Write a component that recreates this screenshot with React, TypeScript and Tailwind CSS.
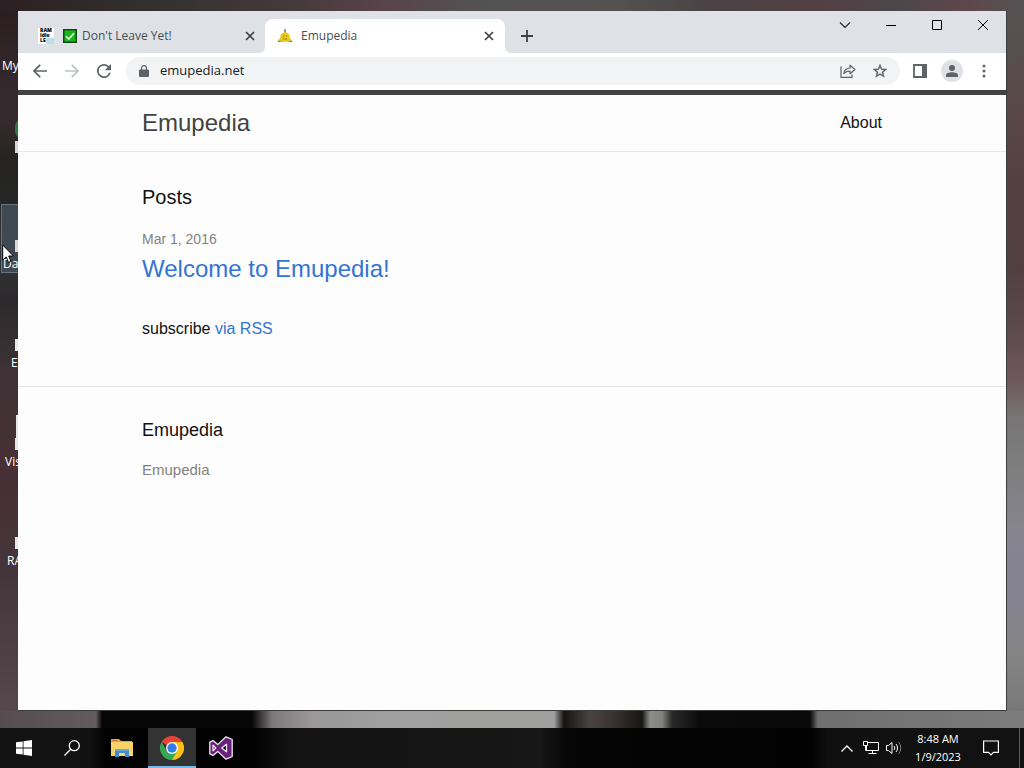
import React from "react";

const tabIcon = "h-4 w-4 shrink-0";

const desktopIcons = [
    { label: "My Computer", short: "My", className: "top-[49px] left-[2px]" },
    { label: "Database", short: "Da", className: "top-[247px] left-[3px]" },
    { label: "Emulators", short: "E", className: "top-[346px] left-[11px]" },
    { label: "Visual Studio", short: "Vis", className: "top-[445px] left-[5px]" },
    { label: "RAM Idle", short: "RA", className: "top-[544px] left-[7px]" },
];

function CloseIcon() {
    return (
        <svg viewBox="0 0 10 10" className="h-2.5 w-2.5" fill="none" stroke="#3c4043" strokeWidth="1.7">
            <path d="M1 1l8 8M9 1l-8 8" />
        </svg>
    );
}

function Desktop() {
    return (
        <div className="relative overflow-hidden bg-[linear-gradient(180deg,#2b1f22_0%,#33282b_10%,#352a2d_16%,#252423_21%,#252626_27%,#33363a_34%,#2c2a2c_41%,#3e3236_52%,#472f34_65%,#44353a_80%,#54484d_100%)]">
            <div className="absolute top-[108px] left-[15px] h-5 w-4 rounded-full bg-[#2b7a3e]" />
            <div className="absolute top-[130px] left-[15px] h-3 w-1 bg-[#d8d8d8]" />
            <div className="absolute top-[193px] left-[1px] h-[69px] w-20 border border-[#68727a] bg-[#3f4952]" />
            <div className="absolute top-[229px] left-[15px] h-3 w-1 bg-[#d8d8d8]" />
            <div className="absolute top-[328px] left-[15px] h-3 w-1 bg-[#e8e8e8]" />
            <div className="absolute top-[404px] left-[16px] h-6 w-1 bg-[#e8e8e8]" />
            <div className="absolute top-[427px] left-[15px] h-3 w-1 bg-[#e8e8e8]" />
            <div className="absolute top-[526px] left-[15px] h-3 w-1 bg-[#e8e8e8]" />
            {desktopIcons.map((icon) => (
                <span key={icon.label} title={icon.label} className={`absolute text-xs leading-none whitespace-nowrap text-white ${icon.className}`}>
                    {icon.short}
                </span>
            ))}
            <svg viewBox="0 0 12 20" className="absolute top-[233px] left-[2px] h-5 w-3">
                <path d="M.7 1v15.2l3.5-3.3 2.3 5.5 2.5-1-2.3-5.4h4.8z" fill="#fff" stroke="#000" />
            </svg>
        </div>
    );
}

function TabStrip() {
    return (
        <div className="flex h-[42px] items-start justify-between bg-[#dee1e6]">
            <div className="flex h-full items-end">
                <div className="flex h-[34px] w-[247px] items-center pr-[7px] pl-5">
                    <div className={`${tabIcon} bg-white pl-0.5 text-[5px] leading-[5px] font-black text-black`}>
                        <div>RAM</div>
                        <div>Idle</div>
                        <div className="flex justify-between">
                            LE
                            <span className="h-1.5 w-2 bg-[#b9e1e8]" />
                        </div>
                    </div>
                    <svg viewBox="0 0 14 14" className="ml-[9px] h-3.5 w-3.5 shrink-0">
                        <rect x=".7" y=".7" width="12.6" height="12.6" fill="#16b51c" stroke="#10420f" strokeWidth="1.4" />
                        <path d="M3 7.3l2.7 2.8L11 4.2" fill="none" stroke="#e9ffe9" strokeWidth="1.6" />
                    </svg>
                    <span className="ml-[5px] flex-1 text-xs whitespace-nowrap text-[#4b4e52]">Don't Leave Yet!</span>
                    <button aria-label="Close tab" className="flex h-4 w-4 items-center justify-center">
                        <CloseIcon />
                    </button>
                </div>
                <div className="relative flex h-[34px] w-60 items-center rounded-t-lg bg-white pr-2 pl-3">
                    {/* Curved feet of the active tab */}
                    <svg viewBox="0 0 6 6" className="absolute bottom-0 -left-1.5 h-1.5 w-1.5">
                        <path d="M6 0v6H0a6 6 0 0 0 6-6z" fill="#fff" />
                    </svg>
                    <svg viewBox="0 0 6 6" className="absolute -right-1.5 bottom-0 h-1.5 w-1.5">
                        <path d="M0 0v6h6a6 6 0 0 1-6-6z" fill="#fff" />
                    </svg>
                    <svg viewBox="0 0 16 16" className={tabIcon}>
                        <path d="M7.4 1h1.2l.5 4H7z" fill="#8c7a4a" />
                        <path d="M.3 14L4 9.5l1.500 4.500zM15.700 14L12 9.500 10.500 14z" fill="#8d8150" />
                        <path d="M8 3.500l2 1.500 2.400 1.500.2 3 1.800 2.800-2.400 1.500H4l-2.400-1.500 1.800-2.800.2-3L6 5z" fill="#e8c81c" />
                        <path d="M6 7.500h1.200v1.200H6zM9 7.500h1.200v1.200H9zM6 10.500h4v1H6z" fill="#a4860f" />
                    </svg>
                    <span className="ml-2 flex-1 text-xs text-[#4b4e52]">Emupedia</span>
                    <button aria-label="Close tab" className="flex h-4 w-4 items-center justify-center">
                        <CloseIcon />
                    </button>
                </div>
                <button aria-label="New tab" className="ml-2 flex h-[34px] w-7 items-center justify-center">
                    <svg viewBox="0 0 12 12" className="h-3 w-3" stroke="#3c4043" strokeWidth="1.8">
                        <path d="M6 0v12M0 6h12" />
                    </svg>
                </button>
            </div>
            <div className="flex">
                <button aria-label="Search tabs" className="flex h-7 w-[46px] items-center justify-center">
                    <svg viewBox="0 0 12 12" className="h-3 w-3" fill="none" stroke="#202124" strokeWidth="1.1">
                        <path d="M1 3.5l5 5 5-5" />
                    </svg>
                </button>
                <button aria-label="Minimize" className="flex h-7 w-[46px] items-center justify-center">
                    <svg viewBox="0 0 10 10" className="h-2.5 w-2.5" stroke="#000">
                        <path d="M0 5.5h10" />
                    </svg>
                </button>
                <button aria-label="Maximize" className="flex h-7 w-[46px] items-center justify-center">
                    <svg viewBox="0 0 10 10" className="h-2.5 w-2.5" fill="none" stroke="#000">
                        <path d="M.5.5h9v9h-9z" />
                    </svg>
                </button>
                <button aria-label="Close" className="flex h-7 w-[46px] items-center justify-center">
                    <svg viewBox="0 0 10 10" className="h-2.5 w-2.5" stroke="#000">
                        <path d="M0 0l10 10M10 0L0 10" />
                    </svg>
                </button>
            </div>
        </div>
    );
}

function Toolbar() {
    return (
        <div className="flex h-[37px] items-center bg-white pr-1.5 pb-px pl-1.5">
            <button aria-label="Back" className="flex h-8 w-8 items-center justify-center">
                <svg viewBox="0 0 14 14" className="h-3.5 w-3.5" fill="none" stroke="#5f6368" strokeWidth="1.7">
                    <path d="M14 7H1.2M7.2.8L1 7l6.2 6.2" />
                </svg>
            </button>
            <button aria-label="Forward" className="flex h-8 w-8 items-center justify-center">
                <svg viewBox="0 0 14 14" className="h-3.5 w-3.5" fill="none" stroke="#bdc1c6" strokeWidth="1.7">
                    <path d="M0 7h12.8M6.8.8L13 7l-6.2 6.2" />
                </svg>
            </button>
            <button aria-label="Reload" className="flex h-8 w-8 items-center justify-center">
                <svg viewBox="4 4 16 16" className="h-3.5 w-3.5" fill="#5f6368">
                    <path d="M17.65 6.35A7.95 7.95 0 0 0 12 4a8 8 0 1 0 7.73 10h-2.08A6 6 0 1 1 12 6c1.66 0 3.14.69 4.22 1.78L13 11h7V4z" />
                </svg>
            </button>
            <div className="ml-1.5 flex h-7 flex-1 items-center rounded-full bg-[#f1f3f4] pr-1 pl-[13px]">
                <svg viewBox="0 0 10 12" className="h-3 w-2.5 shrink-0">
                    <path d="M1 4.500h8a1 1 0 0 1 1 1V11a1 1 0 0 1-1 1H1a1 1 0 0 1-1-1V5.500a1 1 0 0 1 1-1z" fill="#5f6368" />
                    <path d="M2.500 5V3a2.500 2.300 0 0 1 5 0v2" fill="none" stroke="#5f6368" strokeWidth="1.2" />
                </svg>
                <input aria-label="Address and search bar" defaultValue="emupedia.net" className="ml-[11px] min-w-0 flex-1 bg-transparent text-[13px] text-[#202124] outline-none" />
                <button aria-label="Share this page" className="flex h-8 w-8 items-center justify-center">
                    <svg viewBox="0 0 16 16" className="h-4 w-4" fill="none" stroke="#5f6368" strokeWidth="1.2">
                        <path d="M1 3.500v10.900h11V11.500" />
                        <path d="M3.800 10.500c.4-3.500 2.700-5.300 6.200-5.500V2.200L15 6.500l-5 4.200V8.200c-3-.1-4.700.6-6.200 2.300z" strokeLinejoin="round" />
                    </svg>
                </button>
                <button aria-label="Bookmark this tab" className="flex h-8 w-8 items-center justify-center">
                    <svg viewBox="2 2 20 20" className="h-3.5 w-3.5" fill="#5f6368" stroke="#5f6368" strokeWidth=".5">
                        <path d="M22 9.240l-7.190-.62L12 2 9.190 8.630 2 9.240l5.460 4.730L5.820 21 12 17.270 18.180 21l-1.630-7.030zM12 15.400l-3.760 2.270 1-4.280-3.320-2.880 4.380-.38L12 6.100l1.710 4.040 4.380.38-3.320 2.880 1 4.280z" />
                    </svg>
                </button>
            </div>
            <button aria-label="Side panel" className="ml-1 flex h-8 w-8 items-center justify-center">
                <svg viewBox="0 0 14 14" className="h-3.5 w-3.5">
                    <path d="M1 1h12v12H1z" fill="none" stroke="#5f6368" strokeWidth="1.8" />
                    <path d="M9 0h5v14H9z" fill="#5f6368" />
                </svg>
            </button>
            <button aria-label="Profile" className="flex h-8 w-8 items-center justify-center">
                <span className="flex h-[22px] w-[22px] items-center justify-center rounded-full bg-[#dee1e6]">
                    <svg viewBox="0 0 12 12" className="h-3 w-3" fill="#5f6368">
                        <circle cx="6" cy="3" r="3" />
                        <path d="M0 12v-1.800C0 8.200 3.500 7.300 6 7.300s6 .9 6 2.900V12z" />
                    </svg>
                </span>
            </button>
            <button aria-label="Menu" className="flex h-8 w-8 items-center justify-center">
                <svg viewBox="0 0 4 14" className="h-3.5 w-1" fill="#5f6368">
                    <circle cx="2" cy="2" r="1.500" />
                    <circle cx="2" cy="7" r="1.500" />
                    <circle cx="2" cy="12" r="1.500" />
                </svg>
            </button>
        </div>
    );
}

function Page() {
    return (
        <div className="flex-1 overflow-hidden bg-[#fdfdfd] font-['Liberation_Sans',Arial,sans-serif] text-base text-[#111]">
            <header className="border-t-[5px] border-b border-t-[#424242] border-b-[#e8e8e8]">
                <div className="mx-auto flex h-14 max-w-[800px] items-center justify-between px-[30px]">
                    <a href="#home" className="text-2xl text-[#424242]">Emupedia</a>
                    <nav>
                        <a href="#about">About</a>
                    </nav>
                </div>
            </header>
            <main className="mx-auto max-w-[800px] px-[30px] pt-[30px] pb-[45px]">
                <h1 className="mb-[15px] text-xl leading-[30px]">Posts</h1>
                <ul className="mb-[30px]">
                    <li>
                        <span className="block text-sm leading-6 text-[#828282]">Mar 1, 2016</span>
                        <h2 className="text-2xl leading-9">
                            <a href="#welcome" className="text-[#3474d4]">Welcome to Emupedia!</a>
                        </h2>
                    </li>
                </ul>
                <p className="leading-6">
                    subscribe <a href="#feed" className="text-[#3474d4]">via RSS</a>
                </p>
            </main>
            <footer className="border-t border-[#e8e8e8]">
                <div className="mx-auto max-w-[800px] px-[30px] py-[30px]">
                    <h2 className="mb-[15px] text-lg leading-[27px]">Emupedia</h2>
                    <p className="text-[15px] leading-[22px] text-[#828282]">Emupedia</p>
                </div>
            </footer>
        </div>
    );
}

function Taskbar() {
    return (
        <div className="flex h-10 shrink-0 justify-between bg-[linear-gradient(90deg,#141314_0,#121112_90px,#020202_105px,#020202_255px,#131313_290px,#171717_540px,#050505_570px,#020202_810px,#101010_830px,#121212_100%)] text-white">
            <div className="flex">
                <button aria-label="Start" className="flex w-12 items-center justify-center">
                    <svg viewBox="0 0 16 16" className="h-4 w-4" fill="#fff">
                        <path d="M0 2.300l6.700-.9v6.200H0zM7.500 1.200L16 0v7.600H7.500zM0 8.400h6.700v6.200L0 13.700zM7.500 8.400H16V16l-8.500-1.200z" />
                    </svg>
                </button>
                <button aria-label="Search" className="flex w-12 items-center justify-center">
                    <svg viewBox="0 0 16 16" className="h-4 w-4" fill="none" stroke="#fff" strokeWidth="1.3">
                        <circle cx="10.300" cy="5.700" r="5" />
                        <path d="M6.700 9.300L.5 15.500" />
                    </svg>
                </button>
                <button aria-label="File Explorer" className="flex w-[52px] items-center justify-center">
                    <svg viewBox="0 0 22 18" className="h-[18px] w-[22px]">
                        <path d="M0 0h8l2 2h11v3H0z" fill="#e5a535" />
                        <path d="M1 1h5v1H1z" fill="#d4763a" />
                        <path d="M0 3h22v14H0z" fill="#f7d468" />
                        <path d="M4 10h14v8h-4v-4H8v4H4z" fill="#3f8fd0" />
                        <path d="M4 10h14v2H4z" fill="#62a8dc" />
                    </svg>
                </button>
                <button aria-label="Google Chrome" className="flex w-12 items-center justify-center border-b-2 border-[#76b9ed] bg-[#333] pt-0.5">
                    <svg viewBox="0 0 24 24" className="h-6 w-6">
                        <path d="M12 12L1.600 6A12 12 0 0 1 22.400 6z" fill="#ea4335" />
                        <path d="M12 12V6h10.400A12 12 0 0 1 12 24z" fill="#fbc116" />
                        <path d="M1.600 6l5.200 9L12 18l5.200-3L12 24A12 12 0 0 1 1.600 6z" fill="#34a853" />
                        <circle cx="12" cy="12" r="6" fill="#fff" />
                        <circle cx="12" cy="12" r="4.700" fill="#2f7de9" />
                    </svg>
                </button>
                <button aria-label="Visual Studio" className="flex w-[50px] items-center justify-center">
                    <svg viewBox="0 0 24 24" className="h-6 w-6" strokeLinejoin="round">
                        <path
                            d="M17 .8l6.200 2.700v17L17 23.200l-8.200-7.800-4.600 3.900L.8 17.800V6.200l3.400-1.500 4.600 3.900zM17.500 8.200L12.700 12l4.800 3.800zM4 9.200v5.600L6.800 12z"
                            fill="#68217a"
                            fillRule="evenodd"
                            stroke="#f1e6f4"
                            strokeWidth="1.300"
                        />
                    </svg>
                </button>
            </div>
            <div className="flex items-center">
                <button aria-label="Show hidden icons" className="flex h-10 w-6 items-center justify-center">
                    <svg viewBox="0 0 12 7" className="h-[7px] w-3" fill="none" stroke="#fff" strokeWidth="1.3">
                        <path d="M.5 6.500L6 1l5.500 5.500" />
                    </svg>
                </button>
                <button aria-label="Network" className="flex h-10 w-6 items-center justify-center">
                    <svg viewBox="0 0 16 14" className="h-3.5 w-4" fill="none" stroke="#fff">
                        <path d="M5 1.500h10.500v8H3.500V5M9.500 9.500v3M5.500 12.500h8" />
                        <path d="M.5.5h4v4h-4zM2.500 4.500v5h1" />
                    </svg>
                </button>
                <button aria-label="Volume" className="flex h-10 w-[22px] items-center justify-center">
                    <svg viewBox="0 0 16 14" className="h-3.5 w-4" fill="none" stroke="#fff">
                        <path d="M.5 4.500h2l3.500-3v11l-3.500-3h-2z" />
                        <path d="M8 5a3 3 0 0 1 0 4M10 3a6 6 0 0 1 0 8" />
                        <path d="M12.500 1a9 9 0 0 1 0 12" stroke="#777" />
                    </svg>
                </button>
                <button className="flex h-10 w-[66px] flex-col items-center justify-center text-[11px] leading-[18px]">
                    <span>8:48 AM</span>
                    <span>1/9/2023</span>
                </button>
                <button aria-label="Notifications" className="flex h-10 w-10 items-center justify-center">
                    <svg viewBox="0 0 16 16" className="h-4 w-4" fill="none" stroke="#fff" strokeWidth="1.2">
                        <path d="M.6 1h14.800v11.400H10.500L8 15l-2.500-2.600H.6z" />
                    </svg>
                </button>
                <button aria-label="Show desktop" className="ml-2 h-10 w-[5px] border-l border-[#5a5a5a]" />
            </div>
        </div>
    );
}

export default function App() {
    return (
        <div className="flex h-screen flex-col overflow-hidden font-['Open_Sans','Noto_Sans',sans-serif]">
            {/* Wallpaper shows in a thin band on each side of the window */}
            <div className="h-[11px] shrink-0 bg-[linear-gradient(90deg,#2b2023_0%,#33302f_15%,#44393b_28%,#58434a_37%,#535252_47%,#545151_60%,#4a4244_70%,#534045_80%,#4c474a_88%,#5e464c_94%,#565253_100%)]" />
            <div className="grid min-h-0 flex-1 grid-cols-[18px_1fr_18px]">
                <Desktop />
                <div className="flex min-w-0 flex-col border-b border-[#3c3c3c]">
                    <TabStrip />
                    <Toolbar />
                    <Page />
                </div>
                <div className="border-l border-[#3c3c3c] bg-[linear-gradient(180deg,#555253_0%,#5a4a4a_12%,#54403e_25%,#513e3f_36%,#5b494d_45%,#70595d_53%,#777575_58%,#7f7f80_66%,#86848f_74%,#858391_84%,#858585_92%,#787878_100%)]" />
            </div>
            <div className="h-[17px] shrink-0 bg-[linear-gradient(90deg,#544c4e_0,#635b5d_96px,#070606_102px,#070707_252px,#7d7779_272px,#999799_310px,#a1a1a1_400px,#a0a09d_540px,#a0a0a0_554px,#151312_564px,#4a4441_590px,#332c2c_620px,#171514_642px,#8d8d88_650px,#82827e_662px,#2a2829_672px,#0c0b0b_700px,#0a0909_810px,#6f6f6f_818px,#7c7c7c_100%)]" />
            <Taskbar />
        </div>
    );
}
